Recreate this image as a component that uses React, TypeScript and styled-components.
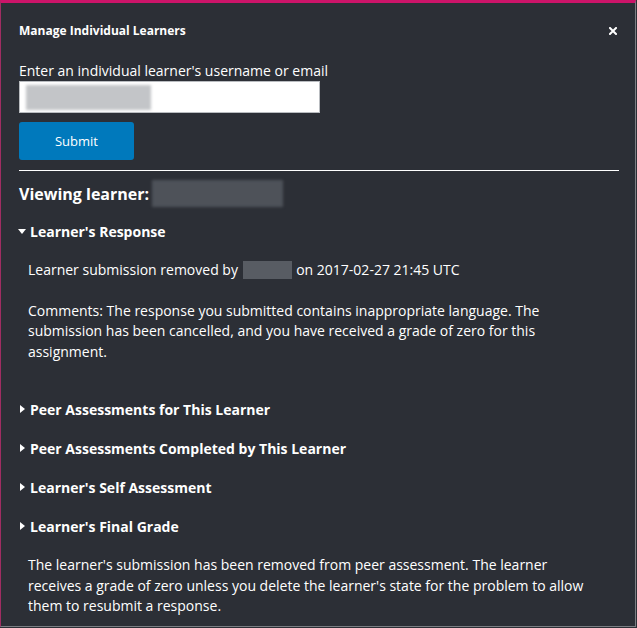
import React from 'react';
import styled, { createGlobalStyle } from 'styled-components';

const GlobalStyle = createGlobalStyle`
  html, body {
    margin: 0;
    padding: 0;
    background: #2c2f36;
  }
  body {
    font-family: "Open Sans", "Liberation Sans", sans-serif;
    color: #ffffff;
  }
`;

const sections = [
  'Peer Assessments for This Learner',
  'Peer Assessments Completed by This Learner',
  "Learner's Self Assessment",
  "Learner's Final Grade",
];

const App = () => {
  return (
    <>
      <GlobalStyle />
      <Modal>
        <Header>
          <Title>Manage Individual Learners</Title>
          <Close aria-label="close">
            <svg width="8" height="8" viewBox="0 0 8 8">
              <path d="M1 1 L7 7 M7 1 L1 7" stroke="#fff" strokeWidth="2" strokeLinecap="square" />
            </svg>
          </Close>
        </Header>

        <Label>Enter an individual learner's username or email</Label>
        <InputBox>
          <Blur $w={125} $h={25} $color="#c3c5c8" />
        </InputBox>
        <SubmitButton>Submit</SubmitButton>

        <Rule />

        <Viewing>
          Viewing learner:
          <Blur $w={131} $h={27} $color="#4e5259" />
        </Viewing>

        <SectionHead $first>
          <Caret $open />
          Learner's Response
        </SectionHead>
        <Body $top={19}>
          Learner submission removed by <InlineBlur /> on 2017-02-27 21:45 UTC
        </Body>
        <Body $top={20}>
          Comments: The response you submitted contains inappropriate language. The
          submission has been cancelled, and you have received a grade of zero for this
          assignment.
        </Body>

        <SectionList>
          {sections.map((s) => (
            <SectionHead key={s}>
              <Caret />
              {s}
            </SectionHead>
          ))}
        </SectionList>

        <Body $top={19}>
          The learner's submission has been removed from peer assessment. The learner
          receives a grade of zero unless you delete the learner's state for the problem to
          allow them to resubmit a response.
        </Body>
      </Modal>
    </>
  );
};

const Modal = styled.div`
  box-sizing: border-box;
  width: 636px;
  height: 627px;
  border-top: 3px solid #cc1469;
  border-left: 1px solid #a02d62;
  border-right: 1px solid #7b7e83;
  border-bottom: 1px solid #7b7e83;
  background: #2c2f36;
  padding: 0 16px 0 18px;
  overflow: hidden;
`;

const Header = styled.div`
  display: flex;
  justify-content: space-between;
  align-items: center;
  padding-top: 17px;
  height: 22px;
`;

const Title = styled.h2`
  margin: 0;
  font-size: 12px;
  font-weight: 700;
  line-height: 22px;
`;

const Close = styled.span`
  display: flex;
  align-items: center;
  margin-right: 2px;
`;

const Label = styled.div`
  margin-top: 19px;
  font-size: 14px;
  line-height: 20px;
`;

const InputBox = styled.div`
  box-sizing: border-box;
  width: 301px;
  height: 32px;
  background: #ffffff;
  border: 1px solid #b9bcc0;
  padding: 3px 6px;
  overflow: hidden;
`;

const Blur = styled.span<{ $w: number; $h: number; $color: string }>`
  display: inline-block;
  vertical-align: middle;
  width: ${(p) => p.$w}px;
  height: ${(p) => p.$h}px;
  background: ${(p) => p.$color};
  filter: blur(1.5px);
`;

const SubmitButton = styled.button`
  display: block;
  margin-top: 9px;
  width: 115px;
  height: 38px;
  border: none;
  border-radius: 3px;
  background: #0079bc;
  color: #ffffff;
  font-family: "Open Sans", "Liberation Sans", sans-serif;
  font-size: 13px;
`;

const Rule = styled.hr`
  margin: 10px 0 0 0;
  width: 600px;
  border: none;
  height: 1px;
  background: #ffffff;
`;

const Viewing = styled.div`
  display: flex;
  align-items: center;
  gap: 3px;
  margin-top: 9px;
  height: 27px;
  font-size: 16px;
  font-weight: 700;
`;

const SectionHead = styled.div<{ $first?: boolean }>`
  display: flex;
  align-items: center;
  gap: 4px;
  margin-top: ${(p) => (p.$first ? '14px' : '0')};
  height: 20px;
  font-size: 14px;
  font-weight: 700;
`;

const Caret = styled.span<{ $open?: boolean }>`
  width: 0;
  height: 0;
  ${(p) =>
    p.$open
      ? `
    margin-left: -1px;
    border-left: 4px solid transparent;
    border-right: 4px solid transparent;
    border-top: 5px solid #ffffff;
  `
      : `
    margin-left: 1px;
    margin-right: 1px;
    border-top: 4px solid transparent;
    border-bottom: 4px solid transparent;
    border-left: 5px solid #ffffff;
  `}
`;

const Body = styled.p<{ $top: number }>`
  margin: ${(p) => p.$top}px 0 0 9px;
  width: 572px;
  font-size: 14px;
  line-height: 20.5px;
`;

const InlineBlur = styled.span`
  display: inline-block;
  vertical-align: -4px;
  width: 49px;
  height: 18px;
  margin: 0 1px;
  background: #585c63;
`;

const SectionList = styled.div`
  display: flex;
  flex-direction: column;
  gap: 19px;
  margin-top: 37px;
`;

export default App;
